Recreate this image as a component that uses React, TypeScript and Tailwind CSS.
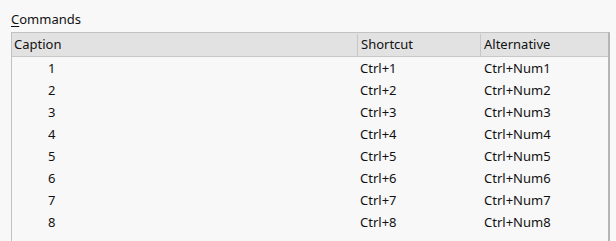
const rows = [1, 2, 3, 4, 5, 6, 7, 8];

export default function App() {
  return (
    <div
      className="w-[616px] h-[241px] overflow-hidden bg-[#f8f8f8] text-[#111] text-[13px] pt-[10px]"
      style={{ fontFamily: '"Noto Sans", "Open Sans", sans-serif' }}
    >
      <div className="pl-[11px] h-[22px] leading-[19px]">
        <span className="underline underline-offset-2">C</span>ommands
      </div>
      <div className="ml-[11px] w-[599px] h-[220px] border border-[#c2c2c2] border-r-2 border-r-[#b5b5b5] border-b-0">
        <div className="flex h-[24px] items-center bg-[#e2e2e2] border-b border-[#c8c8c8] pt-px">
          <div className="w-[345px] pl-[2px]">Caption</div>
          <div className="w-[123px] h-full flex items-center border-l border-[#c8c8c8] pl-[3px]">Shortcut</div>
          <div className="flex-1 h-full flex items-center border-l border-[#c8c8c8] pl-[3px]">Alternative</div>
        </div>
        {rows.map((n) => (
          <div key={n} className="flex h-[22px] items-center pt-px">
            <div className="w-[345px] pl-[36px]">{n}</div>
            <div className="w-[123px] pl-[3px]">Ctrl+{n}</div>
            <div className="flex-1 pl-[4px]">Ctrl+Num{n}</div>
          </div>
        ))}
      </div>
    </div>
  );
}
